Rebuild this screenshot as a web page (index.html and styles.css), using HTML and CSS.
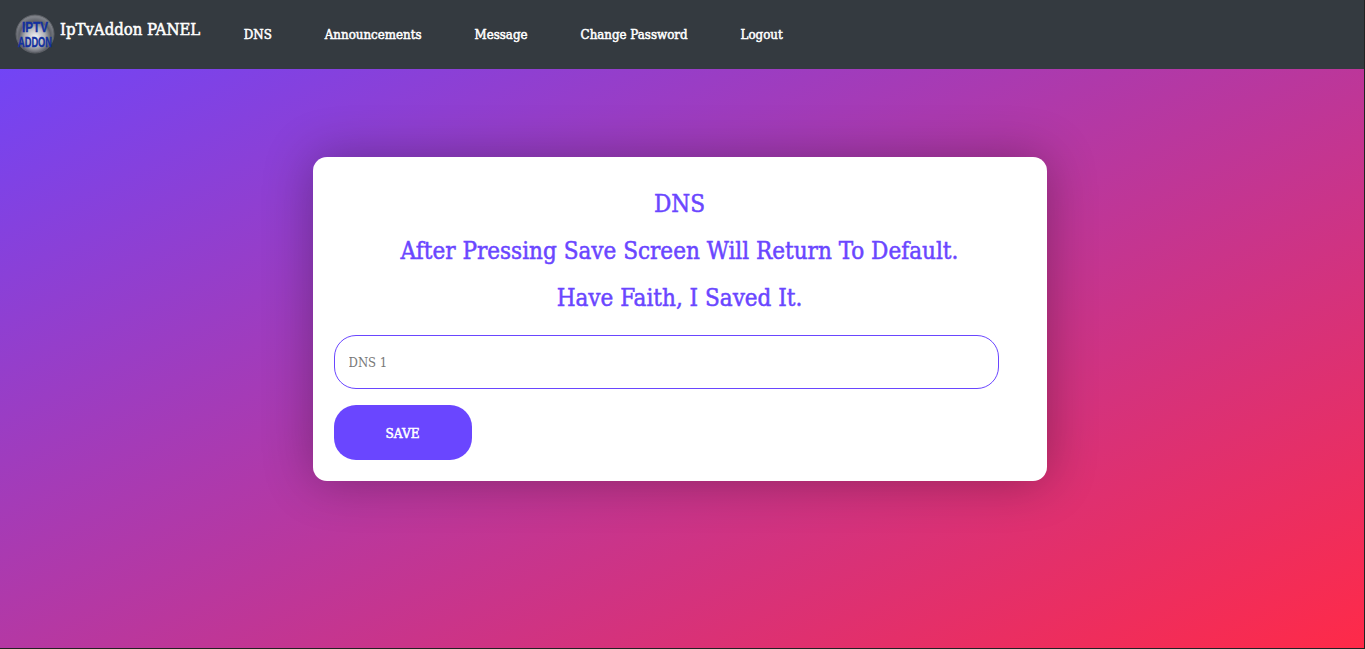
FILE: index.html
```html
<!doctype html>
<html>
  <head>
    <meta charset="UTF-8" />
    <title>IpTvAddon PANEL</title>
    <link rel="stylesheet" href="styles.css">
  </head>
  <body>
    <nav class="navbar">
      <a class="brand" href="#">
        <svg class="logo" width="40" height="40" viewBox="0 0 40 40">
          <defs>
            <radialGradient id="ball" cx="50%" cy="58%" r="52%">
              <stop offset="0" stop-color="#f4f4f6" />
              <stop offset="0.5" stop-color="#b0b2b8" />
              <stop offset="0.8" stop-color="#5f626a" />
              <stop offset="1" stop-color="#7d8087" />
            </radialGradient>
          </defs>
          <circle cx="20" cy="20" r="19" fill="url(#ball)" stroke="#5d6066" />
          <text class="logo-text" x="20" y="18" textLength="26" lengthAdjust="spacingAndGlyphs">IPTV</text>
          <text class="logo-text" x="20" y="33" textLength="34" lengthAdjust="spacingAndGlyphs">ADDON</text>
        </svg>
        <span class="brand-name">IpTvAddon PANEL</span>
      </a>
      <ul class="nav-links">
        <li><a href="#">DNS</a></li>
        <li><a href="#">Announcements</a></li>
        <li><a href="#">Message</a></li>
        <li><a href="#">Change Password</a></li>
        <li><a href="#">Logout</a></li>
      </ul>
    </nav>
    <main class="page">
      <div class="card">
        <h2>DNS</h2>
        <h2>After Pressing Save Screen Will Return To Default.</h2>
        <h2>Have Faith, I Saved It.</h2>
        <form class="dns-form">
          <input type="text" placeholder="DNS 1" />
          <button type="submit">SAVE</button>
        </form>
      </div>
    </main>
  </body>
</html>
```

FILE: styles.css
```css
html,
body {
  height: 100%;
}
body {
  font-family: "DejaVu Serif Condensed", "Liberation Serif", serif;
  margin: 0;
  display: flex;
  flex-direction: column;
  background: linear-gradient(to bottom right, #6a46ff, #ff2a48);
  border-right: 1px solid #222;
  border-bottom: 1px solid #222;
  box-sizing: border-box;
}
.navbar {
  height: 69px;
  flex: none;
  background: #343a40;
  display: flex;
  align-items: center;
  padding-left: 15px;
}
.brand {
  display: flex;
  align-items: center;
  color: #fff;
  text-decoration: none;
  margin-right: 17px;
  margin-top: -2px;
}
.logo {
  margin-right: 5px;
  overflow: visible;
}
.logo-text {
  font-family: "Liberation Sans", sans-serif;
  font-weight: 700;
  font-size: 15px;
  fill: #12309f;
  stroke: #12309f;
  stroke-width: 0.3px;
  text-anchor: middle;
}
.brand-name {
  font-size: 16.6px;
  margin-top: -8px;
  -webkit-text-stroke: 0.5px #fff;
}
.nav-links {
  display: flex;
  list-style: none;
  margin: 0 0 3px;
  padding: 0;
}
.nav-links li {
  padding: 0 26.5px;
}
.nav-links a {
  color: #fff;
  text-decoration: none;
  font-size: 13.2px;
  -webkit-text-stroke: 0.5px #fff;
}
.page {
  flex: 1;
  display: flex;
  justify-content: center;
  padding-top: 88px;
}
.card {
  width: 734px;
  height: 324px;
  box-sizing: border-box;
  background: #fff;
  border-radius: 14px;
  box-shadow: 0 0 50px rgba(0, 0, 0, 0.3);
  padding: 28px 21px 21px;
  margin-right: 5px;
}
h2 {
  margin: 0 0 8px;
  color: #6a46ff;
  text-align: center;
  font-weight: 400;
  font-size: 24px;
  line-height: 39px;
  -webkit-text-stroke: 0.5px #6a46ff;
}
.dns-form {
  margin-top: 17px;
}
input {
  display: block;
  width: 665px;
  height: 54px;
  box-sizing: border-box;
  padding: 0 14px;
  border: 1px solid #6a46ff;
  border-radius: 22px;
  font-family: inherit;
  font-size: 13px;
  outline: none;
}
input::placeholder {
  color: #777;
}
button {
  display: block;
  width: 138px;
  height: 55px;
  margin-top: 16px;
  background: #6a46ff;
  color: #fff;
  border: none;
  border-radius: 22px;
  font-family: inherit;
  font-size: 13.5px;
  -webkit-text-stroke: 0.5px #fff;
}
```
